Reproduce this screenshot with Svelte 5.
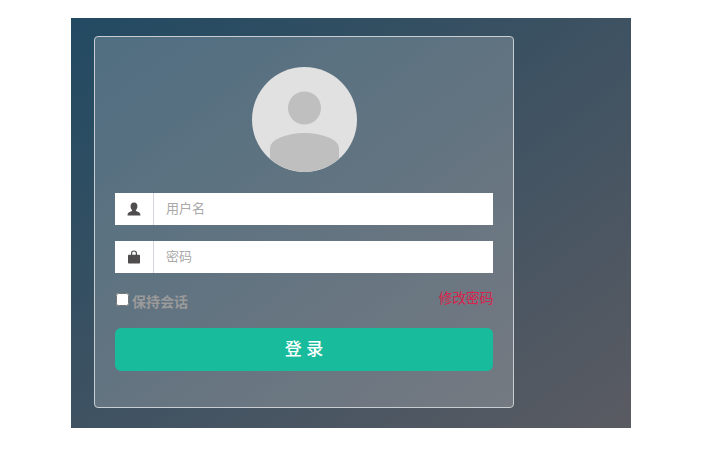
<script>
  let username = "";
  let password = "";
  let remember = false;
</script>

<div class="page">
  <div class="login-bg">
    <form class="card" on:submit|preventDefault>
      <div class="avatar">
        <svg viewBox="0 0 105 105" width="105" height="105">
          <circle cx="52.5" cy="52.5" r="52.5" fill="#e1e1e1" />
          <circle cx="52.5" cy="41" r="16.5" fill="#bfbfbf" />
          <path d="M18 81 A34.5 15 0 0 1 87 81 L87 92 A52.5 52.5 0 0 1 18 92 Z" fill="#bfbfbf" />
        </svg>
      </div>

      <div class="field">
        <span class="addon">
          <svg viewBox="0 0 14 14" width="14" height="14">
            <path d="M7 .5 C9.6 .5 10.4 2.4 10.4 4.2 C10.4 6 9.7 7.3 8.9 8.1 L8.9 9 C10.8 9.9 13.5 10.2 13.5 13.5 L.5 13.5 C.5 10.2 3.2 9.9 5.1 9 L5.1 8.1 C4.3 7.3 3.6 6 3.6 4.2 C3.6 2.4 4.4 .5 7 .5 Z" fill="#4f4d4d" />
          </svg>
        </span>
        <input type="text" placeholder="用户名" bind:value={username} />
      </div>

      <div class="field">
        <span class="addon">
          <svg viewBox="0 0 14 14" width="14" height="14">
            <path d="M4.6 5.5 L4.6 3.2 C4.6 1.7 5.6 1 7 1 C8.4 1 9.4 1.7 9.4 3.2 L9.4 5.5" fill="none" stroke="#4f4d4d" stroke-width="1.2" />
            <rect x="1" y="4.8" width="12" height="8.7" rx=".8" fill="#4f4d4d" />
          </svg>
        </span>
        <input type="password" placeholder="密码" bind:value={password} />
      </div>

      <div class="options">
        <label class="remember">
          <input type="checkbox" bind:checked={remember} />
          <span>保持会话</span>
        </label>
        <a class="change-pwd" href="#top">修改密码</a>
      </div>

      <button type="submit" class="submit">登 录</button>
    </form>
  </div>
</div>

<style>
  :global(body) {
    margin: 0;
    background: #fff;
  }
  .page {
    padding: 18px 0 0 71px;
    font-family: "Liberation Sans", "Noto Sans CJK SC", sans-serif;
  }
  .login-bg {
    width: 560px;
    height: 410px;
    box-sizing: border-box;
    padding: 18px 0 0 23px;
    background: linear-gradient(to bottom right, #224a62 0%, #3e5262 50%, #5a5b62 100%);
  }
  .card {
    width: 420px;
    height: 372px;
    box-sizing: border-box;
    padding: 30px 20px 0;
    border: 1px solid #c9ced2;
    border-radius: 4px;
    background: rgba(255, 255, 255, 0.2);
  }
  .avatar {
    display: flex;
    justify-content: center;
    height: 105px;
    margin-bottom: 21px;
  }
  .field {
    display: flex;
    height: 32px;
    margin-bottom: 16px;
    background: #fff;
  }
  .addon {
    display: flex;
    align-items: center;
    justify-content: center;
    width: 38px;
    border-right: 1px solid #d5d5de;
  }
  .field input {
    flex: 1;
    min-width: 0;
    border: 0;
    outline: 0;
    padding: 0 12px 2px;
    font: 13px "Liberation Sans", "Noto Sans CJK SC", sans-serif;
    color: #555;
  }
  .field input::placeholder {
    color: #a9a9a9;
  }
  .options {
    display: flex;
    justify-content: space-between;
    align-items: flex-start;
    height: 38px;
    margin-top: 17px;
  }
  .remember {
    display: flex;
    align-items: center;
    gap: 3px;
    font-size: 14px;
    font-weight: bold;
    color: #9a9a9a;
  }
  .remember input {
    width: 13px;
    height: 13px;
    margin: 0 0 2px 1px;
  }
  .remember span {
    padding-top: 1px;
  }
  .change-pwd {
    font-size: 14px;
    line-height: 16px;
    letter-spacing: -0.4px;
    color: #d8234c;
    text-decoration: none;
  }
  .submit {
    display: block;
    width: 100%;
    height: 43px;
    border: 0;
    border-radius: 6px;
    padding-bottom: 6px;
    background: #18bc9c;
    color: #fff;
    font: 500 17px "Liberation Sans", "Noto Sans CJK SC", sans-serif;
  }
</style>
